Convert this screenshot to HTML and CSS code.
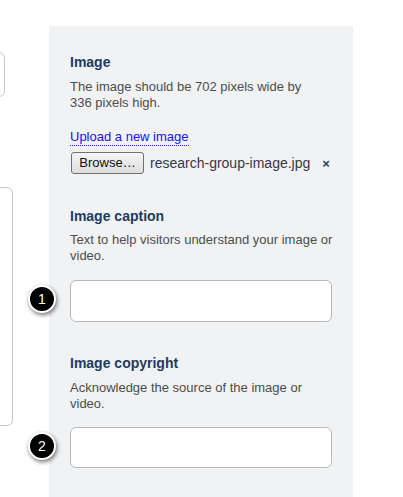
FILE: index.html
```html
<!DOCTYPE html>
<html>
<head>
<meta charset="utf-8">
<link rel="stylesheet" href="styles.css">
</head>
<body>
<div class="page">
  <div class="left">
    <div class="ghost ghost-top"></div>
    <div class="ghost ghost-tall"></div>
  </div>
  <div class="panel">
    <div class="section">
      <h3 class="label">Image</h3>
      <p class="help">The image should be 702 pixels wide by<br>336 pixels high.</p>
      <a class="upload" href="#">Upload a new image</a>
      <div class="file-row">
        <span class="browse">Browse…</span>
        <span class="filename">research-group-image.jpg</span>
        <span class="remove">×</span>
      </div>
    </div>
    <div class="section section-caption">
      <h3 class="label">Image caption</h3>
      <p class="help">Text to help visitors understand your image or<br>video.</p>
      <div class="field">
        <span class="badge">1</span>
        <div class="input"></div>
      </div>
    </div>
    <div class="section section-copy">
      <h3 class="label">Image copyright</h3>
      <p class="help">Acknowledge the source of the image or<br>video.</p>
      <div class="field">
        <span class="badge">2</span>
        <div class="input input-b"></div>
      </div>
    </div>
  </div>
</div>
</body>
</html>
```

FILE: styles.css
```css
html, body {
  margin: 0;
  padding: 0;
  background: #ffffff;
  overflow: hidden;
}
body {
  font-family: "Liberation Sans", Arial, sans-serif;
  width: 403px;
  height: 497px;
}
.page {
  display: flex;
  align-items: flex-start;
}
.left {
  width: 49px;
  display: flex;
  flex-direction: column;
  flex-shrink: 0;
}
.ghost {
  border: 1px solid #c8c8c8;
  border-radius: 6px;
  background: #fff;
  box-sizing: border-box;
}
.ghost-top {
  margin-top: 52px;
  margin-left: -20px;
  width: 25px;
  height: 45px;
}
.ghost-tall {
  margin-top: 90px;
  margin-left: -20px;
  width: 33px;
  height: 239px;
}
.panel {
  width: 304px;
  margin-top: 26px;
  padding: 28px 0 40px 21px;
  box-sizing: border-box;
  background: #f1f2f4;
  min-height: 480px;
}
.label {
  margin: 0;
  font-size: 14px;
  line-height: 17px;
  font-weight: bold;
  color: #233b5c;
}
.help {
  margin: 8px 0 0;
  width: 280px;
  white-space: nowrap;
  font-size: 13px;
  line-height: 16px;
  color: #4d4d4d;
}
.upload {
  display: inline-block;
  margin-top: 18px;
  font-size: 13px;
  line-height: 16px;
  color: #1a10f0;
  text-decoration: none;
  border-bottom: 1px dotted #1a10f0;
  height: 16px;
}
.file-row {
  display: flex;
  align-items: center;
  margin-top: 6px;
  width: 262px;
}
.browse {
  box-sizing: border-box;
  width: 73px;
  height: 22px;
  margin-left: 1px;
  border: 1px solid #707070;
  border-radius: 3px;
  background: linear-gradient(#f5f5f5, #dddddd);
  font-size: 13px;
  line-height: 20px;
  text-align: center;
  color: #111;
}
.filename {
  margin-left: 6px;
  font-size: 14px;
  color: #333a44;
}
.remove {
  margin-left: 12px;
  font-size: 13px;
  font-weight: bold;
  color: #2a3d5a;
}
.section-caption {
  margin-top: 34px;
}
.section-copy {
  margin-top: 33px;
}
.section-caption .help {
  margin-top: 7px;
}
.field {
  position: relative;
  margin-top: 16px;
}
.section-copy .field {
  margin-top: 15px;
}
.input {
  box-sizing: border-box;
  width: 262px;
  height: 42px;
  background: #fff;
  border: 1px solid #b8b8b8;
  border-radius: 6px;
}
.input-b {
  height: 41px;
}
.badge {
  position: absolute;
  left: -42px;
  top: 5px;
  width: 24px;
  height: 24px;
  border: 2px solid #fff;
  border-radius: 50%;
  background: #000;
  color: #fff;
  font-size: 14px;
  line-height: 24px;
  text-align: center;
  box-shadow: 1px 2px 4px rgba(0,0,0,0.55);
}
```
